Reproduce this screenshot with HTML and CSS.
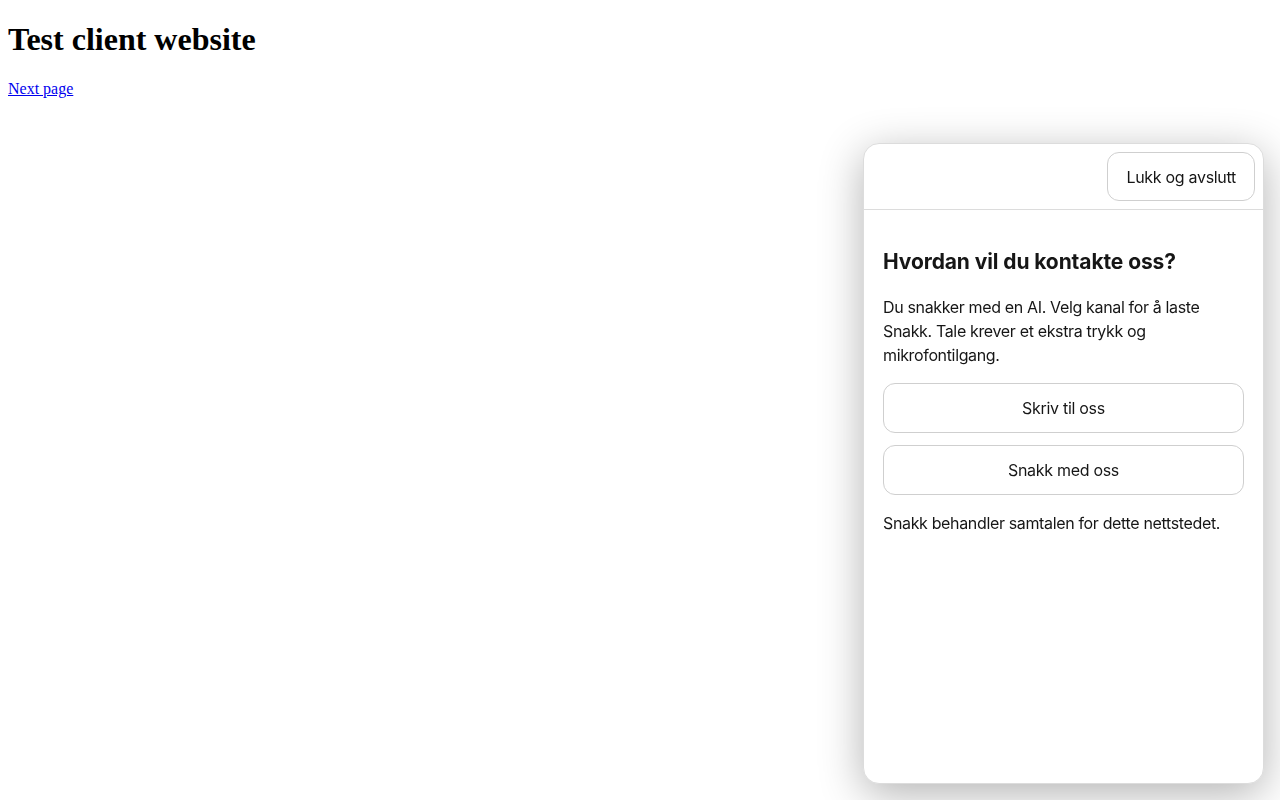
FILE: index.html
```html
<!DOCTYPE html>
<html lang="en">
<head>
    <title>Test client website</title>
    <meta charset="UTF-8">
    <link rel="stylesheet" href="styles.css">
</head>
<body>
<h1>Test client website</h1>
<a href="#">Next page</a>

<div class="widget">
    <div class="widget-head">
        <button class="btn close">Lukk og avslutt</button>
    </div>
    <div class="widget-body">
        <h2 class="title">Hvordan vil du kontakte oss?</h2>
        <p class="intro">Du snakker med en AI. Velg kanal for å laste Snakk. Tale krever et ekstra trykk og mikrofontilgang.</p>
        <div class="choices">
            <button class="btn choice">Skriv til oss</button>
            <button class="btn choice">Snakk med oss</button>
        </div>
        <p class="note">Snakk behandler samtalen for dette nettstedet.</p>
    </div>
</div>
</body>
</html>
```

FILE: styles.css
```css
body {
    font-family: "Liberation Serif", serif;
    margin: 0 8px 8px;
}

.widget {
    position: fixed;
    right: 16px;
    bottom: 16px;
    width: 401px;
    height: 641px;
    box-sizing: border-box;
    background: #fff;
    border: 1px solid #dcdcdc;
    border-radius: 16px;
    box-shadow: 0 10px 44px rgba(0, 0, 0, 0.3);
    font-family: Inter, "Noto Sans", sans-serif;
    color: #161616;
    display: flex;
    flex-direction: column;
    overflow: hidden;
}

.widget-head {
    display: flex;
    justify-content: flex-end;
    padding: 8px;
    border-bottom: 1px solid #dcdcdc;
}

.btn {
    font-family: Inter, "Noto Sans", sans-serif;
    font-size: 16px;
    letter-spacing: -0.3px;
    color: #161616;
    background: #fff;
    border: 1px solid #cfcfcf;
    border-radius: 12px;
    height: 50px;
    cursor: pointer;
}

.close {
    height: 49px;
    padding: 0 18px;
}

.widget-body {
    padding: 20px 19px;
}

.title {
    font-size: 21px;
    line-height: 28px;
    font-weight: 700;
    letter-spacing: -0.1px;
    margin: 18px 0 19px;
}

.intro {
    font-size: 16px;
    line-height: 24px;
    letter-spacing: -0.35px;
    margin: 0 0 16px;
}

.choices {
    display: flex;
    flex-direction: column;
    gap: 12px;
}

.choice {
    width: 100%;
}

.note {
    font-size: 16px;
    line-height: 24px;
    letter-spacing: -0.35px;
    margin: 16px 0 0;
}
```
